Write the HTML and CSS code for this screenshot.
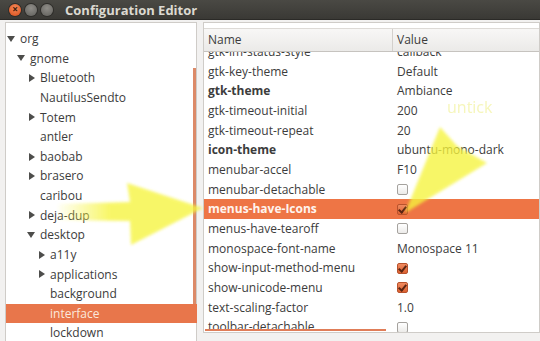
FILE: index.html
```html
<!DOCTYPE html>
<html lang="en">
<head>
  <meta charset="UTF-8" />
  <title>Configuration Editor</title>
  <link rel="stylesheet" href="styles.css">
</head>
<body>
  <div class="titlebar">
    <span class="btn close">×</span>
    <span class="btn min"></span>
    <span class="btn max"></span>
    <span class="title">Configuration Editor</span>
  </div>

  <div class="main">
    <div class="tree">
      <div class="node lvl0"><span class="tw open"></span>org</div>
      <div class="node lvl1"><span class="tw open"></span>gnome</div>
      <div class="node lvl2"><span class="tw"></span>Bluetooth</div>
      <div class="node lvl2"><span class="tw none"></span>NautilusSendto</div>
      <div class="node lvl2"><span class="tw"></span>Totem</div>
      <div class="node lvl2"><span class="tw none"></span>antler</div>
      <div class="node lvl2"><span class="tw"></span>baobab</div>
      <div class="node lvl2"><span class="tw"></span>brasero</div>
      <div class="node lvl2"><span class="tw none"></span>caribou</div>
      <div class="node lvl2"><span class="tw"></span>deja-dup</div>
      <div class="node lvl2"><span class="tw open"></span>desktop</div>
      <div class="node lvl3"><span class="tw"></span>a11y</div>
      <div class="node lvl3"><span class="tw"></span>applications</div>
      <div class="node lvl3"><span class="tw none"></span>background</div>
      <div class="node lvl3 selected"><span class="tw none"></span>interface</div>
      <div class="node lvl3"><span class="tw none"></span>lockdown</div>
      <div class="vscroll"></div>
    </div>

    <div class="side">
      <div class="list">
        <div class="header">
          <span class="col-name">Name</span>
          <span class="col-value">Value</span>
        </div>
        <div class="rows">
          <div class="row"><span>gtk-im-status-style</span><span>callback</span></div>
          <div class="row"><span>gtk-key-theme</span><span>Default</span></div>
          <div class="row bold"><span>gtk-theme</span><span>Ambiance</span></div>
          <div class="row"><span>gtk-timeout-initial</span><span>200</span></div>
          <div class="row"><span>gtk-timeout-repeat</span><span>20</span></div>
          <div class="row bold"><span>icon-theme</span><span>ubuntu-mono-dark</span></div>
          <div class="row"><span>menubar-accel</span><span>F10</span></div>
          <div class="row"><span>menubar-detachable</span><span><i class="check"></i></span></div>
          <div class="row bold selected"><span>menus-have-Icons</span><span><i class="check on"></i></span></div>
          <div class="row"><span>menus-have-tearoff</span><span><i class="check"></i></span></div>
          <div class="row"><span>monospace-font-name</span><span>Monospace 11</span></div>
          <div class="row"><span>show-input-method-menu</span><span><i class="check on"></i></span></div>
          <div class="row"><span>show-unicode-menu</span><span><i class="check on"></i></span></div>
          <div class="row"><span>text-scaling-factor</span><span>1.0</span></div>
          <div class="row"><span>toolbar-detachable</span><span><i class="check"></i></span></div>
        </div>
        <div class="hscroll"></div>
      </div>
      <div class="details">Schema: org.gnome.desktop.interface</div>
    </div>
  </div>

  <svg class="marks" width="540" height="341" viewBox="0 0 540 341">
    <defs>
      <filter id="soft"><feGaussianBlur stdDeviation="1.6"/></filter>
      <linearGradient id="fade" x1="55" y1="0" x2="110" y2="0" gradientUnits="userSpaceOnUse">
        <stop offset="0" stop-color="#f6f43c" stop-opacity="0"/>
        <stop offset="1" stop-color="#f6f43c" stop-opacity="1"/>
      </linearGradient>
    </defs>
    <polygon points="58,204 130,202 127,183 203,208 131,245 130,221 58,220" fill="url(#fade)" opacity="0.78" filter="url(#soft)"/>
    <polygon points="405,213 440,127 457,146 487,163" fill="#f6f43c" opacity="0.78" filter="url(#soft)"/>
  </svg>
  <span class="note">untick</span>
</body>
</html>
```

FILE: styles.css
```css
body {
  margin: 0;
  width: 540px;
  height: 341px;
  overflow: hidden;
  position: relative;
  background-color: #f2f1f0;
  font-family: "Open Sans", "DejaVu Sans", sans-serif;
  font-size: 12px;
  color: #3c3c3c;
}

.titlebar {
  height: 20px;
  display: flex;
  align-items: center;
  padding-left: 9px;
  background: linear-gradient(#4a4944, #3a3935);
  border-bottom: 1px solid #2b2a27;
  box-sizing: border-box;
}

.btn {
  width: 12px;
  height: 12px;
  border-radius: 50%;
  margin-right: 4px;
  background: radial-gradient(circle at 50% 35%, #8f8d88, #5f5e5a);
  box-shadow: 0 0 0 1px #2e2d2a;
  font-size: 10px;
  line-height: 11px;
  text-align: center;
  color: #3a1a0a;
}

.btn.close {
  background: radial-gradient(circle at 50% 35%, #f58a5a, #d94d19);
  font-weight: bold;
}

.title {
  margin-left: 8px;
  font-weight: bold;
  font-size: 13px;
  color: #dcd9d1;
}

.main {
  display: flex;
  gap: 6px;
  padding: 2px 0 0 5px;
}

.tree {
  position: relative;
  width: 192px;
  height: 330px;
  background: #fff;
  border: 1px solid #cfccc8;
  border-bottom: none;
  padding-top: 6px;
  box-sizing: border-box;
}

.node {
  height: 19.63px;
  line-height: 19.63px;
  display: flex;
  align-items: center;
  white-space: nowrap;
}

.lvl0 { padding-left: 1px; }
.lvl1 { padding-left: 11px; }
.lvl2 { padding-left: 21px; }
.lvl3 { padding-left: 31px; }

.tw {
  width: 13px;
  height: 8px;
  position: relative;
  flex: none;
}

.tw::before {
  content: "";
  position: absolute;
  left: 2px;
  top: 0;
  border-left: 6px solid #4d4d4b;
  border-top: 4px solid transparent;
  border-bottom: 4px solid transparent;
}

.tw.open::before {
  top: 1px;
  left: 0;
  border-top: 6px solid #4d4d4b;
  border-left: 4px solid transparent;
  border-right: 4px solid transparent;
  border-bottom: none;
}

.tw.none::before {
  display: none;
}

.node.selected {
  background: #e8764b;
  color: #fbe8dc;
  margin-right: -1px;
}

.vscroll {
  position: absolute;
  right: 0;
  top: 45px;
  width: 3px;
  height: 236px;
  background: #dc8a68;
}

.side {
  flex: 1;
  display: flex;
  flex-direction: column;
}

.list {
  position: relative;
  height: 311px;
  background: #fff;
  border: 1px solid #cfccc8;
  overflow: hidden;
  box-sizing: border-box;
}

.header {
  display: grid;
  grid-template-columns: 188px 1fr;
  height: 22px;
  margin-top: 5px;
  background: linear-gradient(#f8f7f6, #ebeae8);
  border-top: 1px solid #dddad6;
  border-bottom: 1px solid #c6c3bf;
  position: relative;
  z-index: 1;
}

.header span {
  line-height: 22px;
  padding-left: 4px;
}

.header .col-value {
  border-left: 1px solid #d3d0cc;
}

.rows {
  margin-top: -10px;
}

.row {
  display: grid;
  grid-template-columns: 188px 1fr;
  height: 19.66px;
  line-height: 19.66px;
  white-space: nowrap;
}

.row span {
  padding-left: 4px;
  display: flex;
  align-items: center;
}

.row span + span {
  padding-left: 5px;
}

.row.bold span:first-child {
  font-weight: bold;
}

.row.selected {
  background: #ee7545;
  color: #fff4ee;
}

.check {
  width: 9px;
  height: 9px;
  border: 1px solid #a5a29e;
  border-radius: 2px;
  background: linear-gradient(#fff, #ecebe9);
  position: relative;
}

.check.on {
  border-color: #b8522c;
  background: linear-gradient(#f08a5f, #dc6232);
}

.check.on::after {
  content: "";
  position: absolute;
  left: 2px;
  top: 0;
  width: 3px;
  height: 6px;
  border-right: 2px solid #5a2512;
  border-bottom: 2px solid #5a2512;
  transform: rotate(40deg);
}

.hscroll {
  position: absolute;
  left: 1px;
  bottom: 1px;
  width: 181px;
  height: 2px;
  background: #e07d58;
}

.details {
  padding: 5px 0 0 5px;
  color: #555;
}

.marks {
  position: absolute;
  left: 0;
  top: 0;
  pointer-events: none;
}

.note {
  position: absolute;
  left: 447px;
  top: 96px;
  font-size: 16px;
  color: rgba(238, 238, 120, 0.5);
  filter: blur(0.6px);
}
```
